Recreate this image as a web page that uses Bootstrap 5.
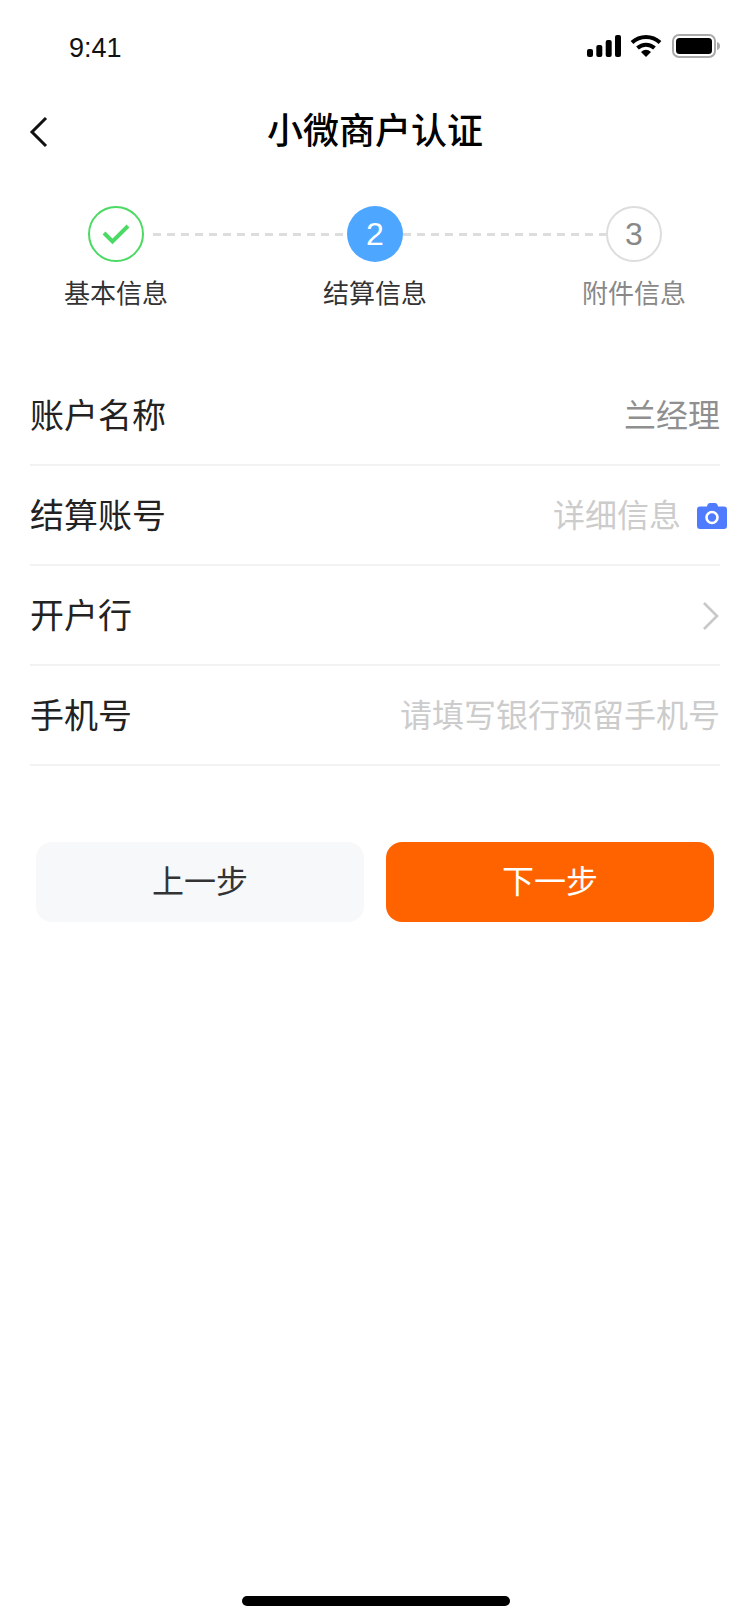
<!DOCTYPE html>
<html lang="zh-CN">
<head>
    <meta charset="UTF-8">
    <meta name="viewport" content="width=device-width, initial-scale=1.0">
    <title>小微商户认证</title>
    <link href="https://cdn.jsdelivr.net/npm/bootstrap@5.3.0/dist/css/bootstrap.min.css" rel="stylesheet">
    <script src="https://cdn.jsdelivr.net/npm/bootstrap@5.3.0/dist/js/bootstrap.bundle.min.js"></script>
    <style>
        body {
            font-family: "Liberation Sans", "Noto Sans CJK SC", sans-serif;
            background: #fff;
            color: #222;
        }
        .phone {
            width: 750px;
            height: 1624px;
        }
        .status-bar {
            height: 96px;
            padding: 0 30px 0 69px;
        }
        .status-time {
            font-size: 27px;
            line-height: 1;
            color: #111;
        }
        .status-icons {
            gap: 10px;
            margin-top: -4px;
        }
        .signal-bars {
            margin-right: -1px;
        }
        .nav-head {
            height: 72px;
            padding-left: 29px;
        }
        .nav-title {
            font-size: 36px;
            font-weight: 500;
            color: #000;
            line-height: 74px;
        }
        .back-link {
            z-index: 1;
        }
        .nav-head .nav-title {
            left: 0;
            right: 0;
        }
        .stepper {
            padding: 38px 88px 0;
        }
        .step-dot {
            width: 56px;
            height: 56px;
            font-size: 32px;
            line-height: 1;
        }
        .dot-done {
            border: 2px solid #4cd964;
        }
        .dot-now {
            background: #4da6ff;
            color: #fff;
        }
        .dot-next {
            border: 2px solid #ddd;
            color: #888;
        }
        .step-dash {
            height: 3px;
            background: repeating-linear-gradient(90deg, #ddd 0 8px, transparent 8px 14px);
        }
        .dash-first {
            width: 194px;
            margin-left: 9px;
        }
        .step-names {
            padding: 13px 64px 0;
            font-size: 26px;
            line-height: 38px;
            color: #333;
        }
        .step-names span {
            width: 104px;
            text-align: center;
        }
        .step-names .name-next {
            color: #888;
        }
        .form-rows {
            padding: 0 30px;
            margin-top: 53px;
        }
        .form-line {
            height: 100px;
            padding-top: 2px;
            border-bottom: 2px solid #f2f2f2;
            font-size: 32px;
        }
        .line-label {
            font-size: 34px;
            color: #222;
        }
        .line-value {
            color: #8f8f8f;
        }
        .line-hint {
            color: #ccc;
        }
        .camera {
            margin-right: -7px;
        }
        .btn-row {
            padding: 76px 36px 0;
            gap: 22px;
        }
        .btn-step {
            flex: 1;
            height: 80px;
            font-size: 32px;
            border-radius: 16px;
            border: 0;
            padding: 0;
        }
        .btn-prev {
            background: #f7f8fa;
            color: #333;
        }
        .btn-go {
            background: #ff6300;
            color: #fff;
        }
        .home-bar {
            width: 268px;
            height: 10px;
            background: #000;
            border-radius: 5px;
            bottom: 18px;
            left: 242px;
        }
    </style>
</head>
<body>
    <div class="phone position-relative overflow-hidden">
        <div class="status-bar d-flex justify-content-between align-items-center">
            <span class="status-time">9:41</span>
            <div class="status-icons d-flex align-items-center">
                <svg class="signal-bars" width="34" height="22" viewBox="0 0 34 22">
                    <rect x="0" y="14" width="6" height="8" rx="2" fill="#000"/>
                    <rect x="9.300" y="10" width="6" height="12" rx="2" fill="#000"/>
                    <rect x="18.700" y="5" width="6" height="17" rx="2" fill="#000"/>
                    <rect x="28" y="0" width="6" height="22" rx="2" fill="#000"/>
                </svg>
                <svg width="32" height="24" viewBox="0 0 32 24">
                    <path d="M2 8.500C10 1 22 1 30 8.500" fill="none" stroke="#000" stroke-width="4"/>
                    <path d="M7.500 14C12.500 9.500 19.500 9.500 24.500 14" fill="none" stroke="#000" stroke-width="4"/>
                    <path d="M11 18 Q16 13.500 21 18 L16 23Z" fill="#000"/>
                </svg>
                <svg width="48" height="24" viewBox="0 0 48 24">
                    <rect x="1" y="1" width="42" height="22" rx="6" fill="none" stroke="#aaa" stroke-width="2"/>
                    <rect x="4" y="4" width="36" height="16" rx="3.500" fill="#000"/>
                    <path d="M45 8c2 .5 3 2 3 4s-1 3.500-3 4z" fill="#aaa"/>
                </svg>
            </div>
        </div>

        <div class="nav-head position-relative d-flex align-items-center">
            <a class="back-link d-flex" href="#">
                <svg width="20" height="32" viewBox="0 0 20 32">
                    <path d="M17 2 L3 16 L17 30" fill="none" stroke="#111" stroke-width="3"/>
                </svg>
            </a>
            <div class="nav-title position-absolute text-center">小微商户认证</div>
        </div>

        <div class="stepper d-flex align-items-center">
            <div class="step-dot dot-done rounded-circle d-flex align-items-center justify-content-center flex-shrink-0">
                <svg width="28" height="22" viewBox="0 0 28 22">
                    <path d="M2 10 L10.500 18.500 L26 3" fill="none" stroke="#4cd964" stroke-width="4"/>
                </svg>
            </div>
            <div class="step-dash dash-first"></div>
            <div class="step-dot dot-now rounded-circle d-flex align-items-center justify-content-center flex-shrink-0">2</div>
            <div class="step-dash flex-grow-1"></div>
            <div class="step-dot dot-next rounded-circle d-flex align-items-center justify-content-center flex-shrink-0">3</div>
        </div>
        <div class="step-names d-flex justify-content-between">
            <span>基本信息</span>
            <span>结算信息</span>
            <span class="name-next">附件信息</span>
        </div>

        <div class="form-rows">
            <div class="form-line d-flex justify-content-between align-items-center">
                <span class="line-label">账户名称</span>
                <span class="line-value">兰经理</span>
            </div>
            <div class="form-line d-flex justify-content-between align-items-center">
                <span class="line-label">结算账号</span>
                <span class="d-flex align-items-center gap-3">
                    <span class="line-hint">详细信息</span>
                    <svg class="camera" width="30" height="26" viewBox="0 0 30 26">
                        <path d="M10 3.500 Q10.500 0 13 0 H18 Q20.500 0 21 3.500 H27 Q30 3.500 30 6.500 V23 Q30 26 27 26 H3 Q0 26 0 23 V6.500 Q0 3.500 3 3.500Z" fill="#4f7cff"/>
                        <circle cx="15" cy="14.500" r="5.500" fill="none" stroke="#fff" stroke-width="2.600"/>
                    </svg>
                </span>
            </div>
            <div class="form-line d-flex justify-content-between align-items-center">
                <span class="line-label">开户行</span>
                <svg width="18" height="30" viewBox="0 0 18 30">
                    <path d="M2 2 L15 15 L2 28" fill="none" stroke="#c8c8c8" stroke-width="2.600"/>
                </svg>
            </div>
            <div class="form-line d-flex justify-content-between align-items-center">
                <span class="line-label">手机号</span>
                <span class="line-hint">请填写银行预留手机号</span>
            </div>
        </div>

        <div class="btn-row d-flex">
            <button type="button" class="btn btn-step btn-prev">上一步</button>
            <button type="button" class="btn btn-step btn-go">下一步</button>
        </div>

        <div class="home-bar position-absolute"></div>
    </div>
</body>
</html>
